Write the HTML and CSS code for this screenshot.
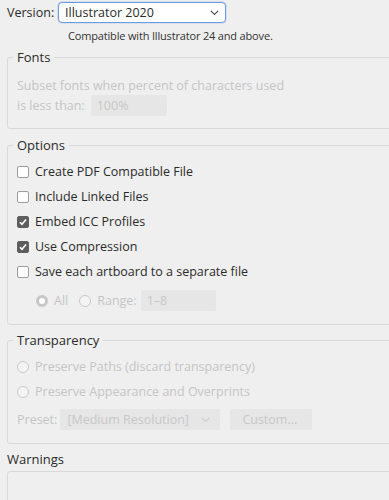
FILE: index.html
```html
<!DOCTYPE html>
<html>
<head>
<meta charset="utf-8">
<link rel="stylesheet" href="styles.css">
</head>
<body>
<div class="page">
  <div class="version-row">
    <span class="label">Version:</span>
    <div class="select active">
      <span>Illustrator 2020</span>
      <svg class="chev" width="9" height="6" viewBox="0 0 9 6"><path d="M1 1l3.5 3.5L8 1" fill="none" stroke="#555" stroke-width="1.1"/></svg>
    </div>
  </div>
  <div class="compat">Compatible with Illustrator 24 and above.</div>

  <fieldset class="group fonts">
    <legend>Fonts</legend>
    <div class="fonts-body disabled">
      <div class="line">Subset fonts when percent of characters used</div>
      <div class="line-row">
        <span>is less than:</span>
        <div class="input pct">100%</div>
      </div>
    </div>
  </fieldset>

  <fieldset class="group options">
    <legend>Options</legend>
    <div class="opts-body">
      <div class="check-row"><span class="box"></span><span>Create PDF Compatible File</span></div>
      <div class="check-row"><span class="box"></span><span>Include Linked Files</span></div>
      <div class="check-row"><span class="box checked"><svg width="10" height="10" viewBox="0 0 10 10"><path d="M2 5.2l2 2.1L8 2.6" fill="none" stroke="#fff" stroke-width="1.6"/></svg></span><span>Embed ICC Profiles</span></div>
      <div class="check-row"><span class="box checked"><svg width="10" height="10" viewBox="0 0 10 10"><path d="M2 5.2l2 2.1L8 2.6" fill="none" stroke="#fff" stroke-width="1.6"/></svg></span><span>Use Compression</span></div>
      <div class="check-row"><span class="box"></span><span>Save each artboard to a separate file</span></div>
      <div class="range-row disabled">
        <span class="radio on"></span><span class="all">All</span>
        <span class="radio"></span><span class="range-label">Range:</span>
        <div class="input range">1–8</div>
      </div>
    </div>
  </fieldset>

  <fieldset class="group transparency">
    <legend>Transparency</legend>
    <div class="trans-body disabled">
      <div class="radio-row"><span class="radio"></span><span>Preserve Paths (discard transparency)</span></div>
      <div class="radio-row"><span class="radio"></span><span>Preserve Appearance and Overprints</span></div>
      <div class="preset-row">
        <span>Preset:</span>
        <div class="input preset"><span>[Medium Resolution]</span>
          <svg class="chev" width="9" height="6" viewBox="0 0 9 6"><path d="M1 1l3.5 3.5L8 1" fill="none" stroke="#cfcfcf" stroke-width="1.1"/></svg>
        </div>
        <div class="input custom">Custom...</div>
      </div>
    </div>
  </fieldset>

  <div class="warn-label">Warnings</div>
  <div class="warn-box"></div>
</div>
</body>
</html>
```

FILE: styles.css
```css
html, body {
  margin: 0;
  padding: 0;
  background: #efefef;
  overflow: hidden;
}
.page {
  width: 389px;
  height: 500px;
  overflow: hidden;
  font-family: "Open Sans", "DejaVu Sans", sans-serif;
  font-size: 12.5px;
  color: #2b2b2b;
  padding-top: 2px;
  box-sizing: border-box;
}
.version-row {
  display: flex;
  align-items: center;
  padding-left: 7px;
  height: 21px;
}
.label {
  width: 51px;
}
.select {
  box-sizing: border-box;
  width: 168px;
  height: 21px;
  background: #fff;
  border: 1px solid #6c9be0;
  border-radius: 4px;
  box-shadow: 0 0 0 0.5px rgba(108, 155, 224, 0.35);
  display: flex;
  align-items: center;
  justify-content: space-between;
  padding: 0 6px 0 6px;
}
.chev { display: block; }
.compat {
  font-size: 11px;
  letter-spacing: -0.17px;
  line-height: 14px;
  margin-top: 6px;
  padding-left: 68px;
  color: #333;
}
.group {
  margin: 0 0 0 7px;
  width: 430px;
  border: 1px solid #d9d9d9;
  border-radius: 3px;
  padding: 0 0 0 5px;
  box-sizing: border-box;
}
.group legend {
  padding: 0 4px;
  line-height: 16px;
  font-size: 13px;
  color: #2b2b2b;
}
.fonts { margin-top: 6px; }
.disabled { color: #c5c5c5; }
.fonts-body {
  padding: 13px 0 12px 4px;
}
.line { line-height: 16px; }
.line-row {
  display: flex;
  align-items: center;
  height: 21px;
  margin-top: 1px;
}
.input {
  box-sizing: border-box;
  height: 21px;
  background: #e6e6e6;
  border-radius: 2px;
  display: flex;
  align-items: center;
  color: #c8c8c8;
}
.pct {
  width: 76px;
  margin-left: 6px;
  padding-left: 6px;
}
.options { margin-top: 8px; }
.opts-body {
  padding: 6px 0 13px 4px;
}
.check-row, .radio-row {
  height: 25px;
  display: flex;
  align-items: center;
}
.box {
  box-sizing: border-box;
  width: 12px;
  height: 12px;
  border: 1px solid #9d9d9d;
  border-radius: 2px;
  background: #fff;
  margin-right: 6px;
  display: flex;
  align-items: center;
  justify-content: center;
}
.box.checked {
  background: #5e5e5e;
  border-color: #5e5e5e;
}
.box svg { display: block; }
.range-row {
  display: flex;
  align-items: center;
  height: 21px;
  margin-top: 6px;
  padding-left: 19px;
}
.radio {
  box-sizing: border-box;
  width: 12px;
  height: 12px;
  border: 1px solid #c9c9c9;
  border-radius: 50%;
  background: #f4f4f4;
  margin-right: 6px;
}
.radio.on {
  border: 3.5px solid #c6c6c6;
  background: #fff;
}
.all { margin-right: 11px; }
.range-label { margin-right: 4px; }
.range {
  width: 75px;
  padding-left: 6px;
}
.transparency { margin-top: 7px; }
.trans-body {
  padding: 6px 0 13px 4px;
}
.preset-row {
  display: flex;
  align-items: center;
  height: 21px;
  margin-top: 5px;
}
.preset {
  width: 160px;
  margin-left: 3px;
  padding: 0 10px 0 7px;
  justify-content: space-between;
}
.custom {
  width: 82px;
  margin-left: 10px;
  padding-left: 12px;
}
.warn-label {
  margin-top: 7px;
  padding-left: 7px;
  line-height: 16px;
  font-size: 13px;
}
.warn-box {
  margin: 4px 0 0 7px;
  width: 430px;
  height: 60px;
  border: 1px solid #d9d9d9;
  border-radius: 3px;
}
```
